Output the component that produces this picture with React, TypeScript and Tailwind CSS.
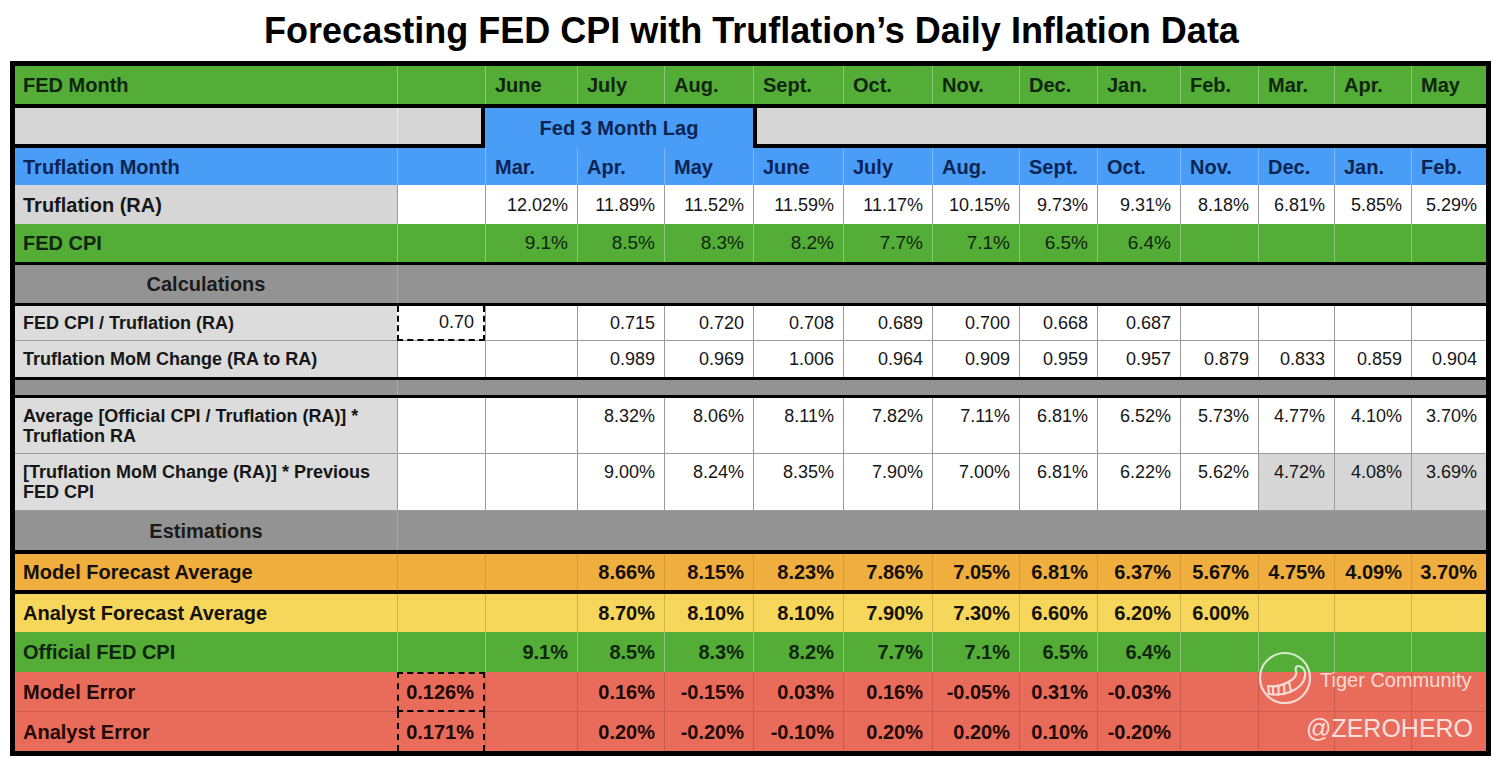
import type { ReactNode } from "react";

// Column widths measured off the sheet: label, spacer, then 12 month columns
const COLS =
  "grid grid-cols-[382px_88px_92px_87px_89px_90px_89px_87px_78px_83px_78px_76px_77px_75px]";

const FED_MONTHS = ["June", "July", "Aug.", "Sept.", "Oct.", "Nov.", "Dec.", "Jan.", "Feb.", "Mar.", "Apr.", "May"];
const TRU_MONTHS = ["Mar.", "Apr.", "May", "June", "July", "Aug.", "Sept.", "Oct.", "Nov.", "Dec.", "Jan.", "Feb."];

type Val = string | { v: string; cls: string };

function Bar({ h = "h-[4px]" }: { h?: string }) {
  return <div className={`${h} bg-black`} />;
}

function MonthRow({
  label,
  months,
  row,
  line,
  h,
}: {
  label: string;
  months: string[];
  row: string;
  line: string;
  h: string;
}) {
  return (
    <div className={`${COLS} ${h} ${row} text-[20px] font-bold`}>
      <div className="flex items-center pl-[8px]">{label}</div>
      <div className={`border-l ${line}`} />
      {months.map((m, i) => (
        <div key={i} className={`flex items-center pl-[9px] border-l ${line}`}>
          {m}
        </div>
      ))}
    </div>
  );
}

function DataRow({
  h,
  row,
  line,
  label,
  labelCls,
  valCls,
  col2,
  values,
  top = false,
  bottom = "",
}: {
  h: string;
  row: string;
  line: string;
  label: ReactNode;
  labelCls: string;
  valCls: string;
  col2?: ReactNode;
  values: Val[];
  top?: boolean;
  bottom?: string;
}) {
  const align = top ? "items-start pt-[8px]" : "items-center";
  return (
    <div className={`${COLS} ${h} ${row} ${bottom}`}>
      <div className={`flex ${align} pl-[8px] leading-[20px] ${labelCls}`}>{label}</div>
      {col2 ?? <div className={`border-l ${line}`} />}
      {values.map((val, i) => {
        const v = typeof val === "string" ? val : val.v;
        const extra = typeof val === "string" ? "" : val.cls;
        return (
          <div key={i} className={`flex justify-end ${align} pr-[9px] leading-[20px] border-l ${line} ${valCls} ${extra}`}>
            {v}
          </div>
        );
      })}
    </div>
  );
}

function Section({ label, h }: { label: string; h: string }) {
  return (
    <div className={`flex ${h} bg-[#939393]`}>
      <div className="flex w-[382px] items-center justify-center text-[20px] font-bold text-[#1b1b1b]">
        {label}
      </div>
      <div className="flex-1 border-l border-[#a8a8a8]" />
    </div>
  );
}

function TigerLogo() {
  return (
    <svg width="54" height="54" viewBox="0 0 54 54" fill="none" stroke="white" strokeWidth="2.2" strokeLinejoin="round" strokeLinecap="round">
      <circle cx="27" cy="27" r="25" />
      <path d="M40 15 C45 15 48 20 47 25 C46 32 40 38 32 41 C25 44 17 44 11 43 L10 35 C18 36 26 34 32 30 C37 27 39 23 38 20 C37 18 38 15 40 15 Z" />
      <path d="M15 35.6 L15 43.4" />
      <path d="M20.5 35.2 L20.5 43.6" />
      <path d="M26 33.8 L26.5 42.6" />
      <path d="M31 31 L33 40.4" />
    </svg>
  );
}

const GREEN = "bg-[#54ad36] text-[#10260e]";
const GREEN_LINE = "border-[#8dc678]";
const WHITE_LINE = "border-[#9b9b9b]";
const dash = "border-dashed border-black";

export default function App() {
  const e = "";
  return (
    <div className="relative w-[1503px] h-[764px] bg-white font-['Liberation_Sans',Arial,sans-serif] text-[#161616]">
      <div className="flex h-[61px] items-center justify-center text-[36px] font-bold text-black">
        Forecasting FED CPI with Truflation’s Daily Inflation Data
      </div>

      <div className="ml-[10px] w-[1481px] border-[5px] border-black">
        <MonthRow label="FED Month" months={FED_MONTHS} row={GREEN} line={GREEN_LINE} h="h-[38px]" />
        <Bar />

        {/* lag marker row */}
        <div className="flex h-[40px]">
          <div className="flex w-[470px] border-r-4 border-b-4 border-black bg-[#d6d6d6]">
            <div className="w-[382px]" />
            <div className="flex-1 border-l border-[#ececec]" />
          </div>
          <div className="flex w-[268px] items-center justify-center bg-[#4a9df7] text-[20px] font-bold text-[#0c2452]">
            Fed 3 Month Lag
          </div>
          <div className="flex-1 border-l-4 border-b-4 border-black bg-[#d6d6d6]" />
        </div>

        <MonthRow
          label="Truflation Month"
          months={TRU_MONTHS}
          row="bg-[#4a9df7] text-[#0c2452]"
          line="border-[#7fb8f7]"
          h="h-[37px]"
        />

        <DataRow
          h="h-[39px]"
          row="bg-white"
          line={WHITE_LINE}
          label="Truflation (RA)"
          labelCls="bg-[#d6d6d6] text-[20px] font-bold"
          valCls="text-[18px]"
          values={["12.02%", "11.89%", "11.52%", "11.59%", "11.17%", "10.15%", "9.73%", "9.31%", "8.18%", "6.81%", "5.85%", "5.29%"]}
        />
        <DataRow
          h="h-[38px]"
          row={GREEN}
          line={GREEN_LINE}
          label="FED CPI"
          labelCls="text-[20px] font-bold"
          valCls="text-[19px]"
          values={["9.1%", "8.5%", "8.3%", "8.2%", "7.7%", "7.1%", "6.5%", "6.4%", e, e, e, e]}
        />
        <Bar h="h-[3px]" />
        <Section label="Calculations" h="h-[38px]" />
        <Bar h="h-[3px]" />

        <DataRow
          h="h-[35px]"
          row="bg-white"
          line={WHITE_LINE}
          bottom="border-b border-[#9b9b9b]"
          label="FED CPI / Truflation (RA)"
          labelCls="bg-[#dcdcdc] text-[18px] font-bold"
          valCls="text-[18px]"
          col2={
            <div className={`flex items-center justify-end pr-[9px] text-[18px] border-x-2 border-b-2 -mb-px ${dash}`}>
              0.70
            </div>
          }
          values={[e, "0.715", "0.720", "0.708", "0.689", "0.700", "0.668", "0.687", e, e, e, e]}
        />
        <DataRow
          h="h-[36px]"
          row="bg-white"
          line={WHITE_LINE}
          label="Truflation MoM Change (RA to RA)"
          labelCls="bg-[#dcdcdc] text-[18px] font-bold"
          valCls="text-[18px]"
          values={[e, "0.989", "0.969", "1.006", "0.964", "0.909", "0.959", "0.957", "0.879", "0.833", "0.859", "0.904"]}
        />
        <Bar h="h-[3px]" />
        <div className="flex h-[15px] bg-[#939393]">
          <div className="w-[382px]" />
          <div className="flex-1 border-l border-[#a8a8a8]" />
        </div>
        <Bar h="h-[3px]" />

        <DataRow
          h="h-[56px]"
          top
          row="bg-white"
          line={WHITE_LINE}
          bottom="border-b border-[#9b9b9b]"
          label={<span>Average [Official CPI / Truflation (RA)] * Truflation RA</span>}
          labelCls="bg-[#dcdcdc] text-[18px] font-bold pr-[12px]"
          valCls="text-[18px]"
          values={[e, "8.32%", "8.06%", "8.11%", "7.82%", "7.11%", "6.81%", "6.52%", "5.73%", "4.77%", "4.10%", "3.70%"]}
        />
        <DataRow
          h="h-[57px]"
          top
          row="bg-white"
          line={WHITE_LINE}
          bottom="border-b border-[#9b9b9b]"
          label={<span>[Truflation MoM Change (RA)] * Previous FED CPI</span>}
          labelCls="bg-[#dcdcdc] text-[18px] font-bold pr-[12px]"
          valCls="text-[18px]"
          values={[
            e,
            "9.00%",
            "8.24%",
            "8.35%",
            "7.90%",
            "7.00%",
            "6.81%",
            "6.22%",
            "5.62%",
            { v: "4.72%", cls: "bg-[#d6d6d6]" },
            { v: "4.08%", cls: "bg-[#d6d6d6]" },
            { v: "3.69%", cls: "bg-[#d6d6d6]" },
          ]}
        />
        <Section label="Estimations" h="h-[39px]" />
        <Bar />

        <DataRow
          h="h-[36px]"
          row="bg-[#efae3d] text-[#141006]"
          line="border-[#d69a36]"
          label="Model Forecast Average"
          labelCls="text-[20px] font-bold"
          valCls="text-[20px] font-bold"
          values={[e, "8.66%", "8.15%", "8.23%", "7.86%", "7.05%", "6.81%", "6.37%", "5.67%", "4.75%", "4.09%", "3.70%"]}
        />
        <Bar />
        <DataRow
          h="h-[38px]"
          row="bg-[#f7d75b] text-[#141206]"
          line="border-[#cfb24d]"
          label="Analyst Forecast Average"
          labelCls="text-[20px] font-bold"
          valCls="text-[20px] font-bold"
          values={[e, "8.70%", "8.10%", "8.10%", "7.90%", "7.30%", "6.60%", "6.20%", "6.00%", e, e, e]}
        />
        <DataRow
          h="h-[40px]"
          row={GREEN}
          line={GREEN_LINE}
          label="Official FED CPI"
          labelCls="text-[20px] font-bold"
          valCls="text-[20px] font-bold"
          values={["9.1%", "8.5%", "8.3%", "8.2%", "7.7%", "7.1%", "6.5%", "6.4%", e, e, e, e]}
        />
        <DataRow
          h="h-[40px]"
          row="bg-[#e96b59] text-[#1e0906]"
          line="border-[#c95c4c]"
          bottom="border-b border-[#c95c4c]"
          label="Model Error"
          labelCls="text-[20px] font-bold"
          valCls="text-[20px] font-bold"
          col2={
            <div className={`flex items-center justify-end pr-[9px] text-[20px] font-bold border-2 -mb-px ${dash}`}>
              0.126%
            </div>
          }
          values={[e, "0.16%", "-0.15%", "0.03%", "0.16%", "-0.05%", "0.31%", "-0.03%", e, e, e, e]}
        />
        <DataRow
          h="h-[39px]"
          row="bg-[#e96b59] text-[#1e0906]"
          line="border-[#c95c4c]"
          label="Analyst Error"
          labelCls="text-[20px] font-bold"
          valCls="text-[20px] font-bold"
          col2={
            <div className={`flex items-center justify-end pr-[9px] text-[20px] font-bold border-x-2 ${dash}`}>
              0.171%
            </div>
          }
          values={[e, "0.20%", "-0.20%", "-0.10%", "0.20%", "0.20%", "0.10%", "-0.20%", e, e, e, e]}
        />
      </div>

      {/* watermark overlay */}
      <div className="absolute left-[1258px] top-[651px] opacity-75">
        <TigerLogo />
      </div>
      <div className="absolute left-[1320px] top-[668px] text-[20px] leading-[24px] text-white opacity-75">
        Tiger Community
      </div>
      <div className="absolute left-[1306px] top-[713px] text-[25px] leading-[30px] text-white opacity-80">
        @ZEROHERO
      </div>
    </div>
  );
}
